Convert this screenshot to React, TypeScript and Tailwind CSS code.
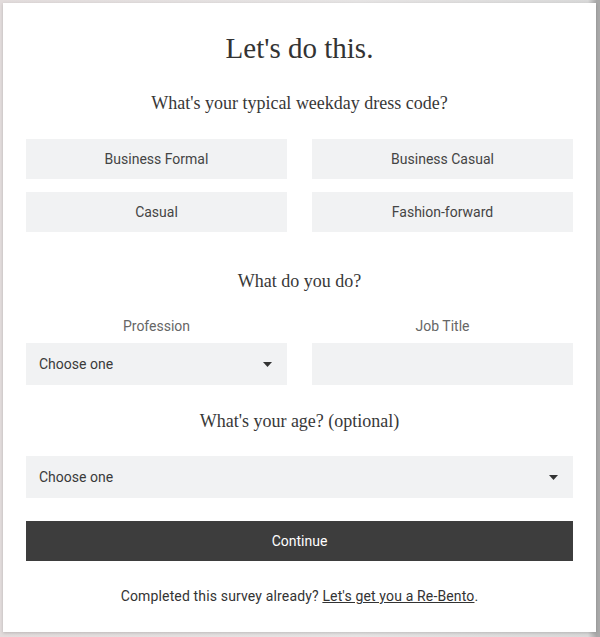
import React from "react";

const serif = { fontFamily: '"Liberation Serif", "Times New Roman", serif' };

function Caret() {
  return (
    <svg width="9" height="5" viewBox="0 0 9 5" className="shrink-0">
      <path d="M0 0 L9 0 L4.5 5 Z" fill="#333333" />
    </svg>
  );
}

function Choice({ label }: { label: string }) {
  return (
    <button className="h-[40px] bg-[#f1f2f3] text-[14px] text-[#444444] flex items-center justify-center">
      {label}
    </button>
  );
}

function Select({ className = "" }: { className?: string }) {
  return (
    <div className={"h-[42px] bg-[#f1f2f3] flex items-center justify-between pl-[13px] pr-[15px] text-[14px] text-[#3a3a3a] " + className}>
      <span>Choose one</span>
      <Caret />
    </div>
  );
}

export default function App() {
  return (
    <div
      className="w-[600px] h-[637px] pt-[3px] pl-[3px] bg-[linear-gradient(90deg,#e2dcdc_0%,#e6e4e4_60%,#d9d9d9_98%,#a9a9a9_99.4%)]"
      style={{ fontFamily: 'Roboto, "Liberation Sans", Arial, sans-serif' }}
    >
      <div className="w-[593px] h-[629px] bg-white shadow-[0_1px_3px_rgba(0,0,0,0.18)] flex flex-col px-[23px] pt-[27px]">
        <h1 className="text-[29px] leading-[36px] text-[#333333] text-center" style={serif}>
          Let's do this.
        </h1>
        <h2 className="mt-[25px] text-[18px] leading-[24px] text-[#383838] text-center" style={serif}>
          What's your typical weekday dress code?
        </h2>
        <div className="mt-[24px] grid grid-cols-2 gap-x-[25px] gap-y-[13px]">
          <Choice label="Business Formal" />
          <Choice label="Business Casual" />
          <Choice label="Casual" />
          <Choice label="Fashion-forward" />
        </div>
        <h2 className="mt-[37px] text-[18px] leading-[24px] text-[#383838] text-center" style={serif}>
          What do you do?
        </h2>
        <div className="mt-[23px] grid grid-cols-2 gap-x-[25px]">
          <div className="flex flex-col">
            <label className="text-[14px] leading-[20px] text-[#666666] text-center">Profession</label>
            <Select className="mt-[7px]" />
          </div>
          <div className="flex flex-col">
            <label className="text-[14px] leading-[20px] text-[#666666] text-center">Job Title</label>
            <div className="mt-[7px] h-[42px] bg-[#f1f2f3]" />
          </div>
        </div>
        <h2 className="mt-[24px] text-[18px] leading-[24px] text-[#383838] text-center" style={serif}>
          What's your age? (optional)
        </h2>
        <Select className="mt-[23px]" />
        <button className="mt-[23px] h-[40px] bg-[#3d3d3d] text-white text-[14px] flex items-center justify-center">
          Continue
        </button>
        <p className="mt-[25px] text-[14px] leading-[20px] tracking-[0.15px] text-[#333333] text-center">
          Completed this survey already? <span className="underline">Let's get you a Re-Bento</span>.
        </p>
      </div>
    </div>
  );
}
